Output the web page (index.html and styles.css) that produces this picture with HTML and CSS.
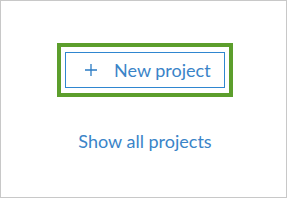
FILE: index.html
```html
<!DOCTYPE html>
<html lang="en">
<head>
    <meta charset="UTF-8">
    <meta name="viewport" content="width=device-width, initial-scale=1.0">
    <title>Projects</title>
    <link rel="stylesheet" href="styles.css">
</head>
<body>

<div class="panel">
    <div class="highlight">
        <button class="new-button">
            <svg class="plus-icon" width="12" height="12" viewBox="0 0 12 12">
                <path d="M6 0V12M0 6H12" stroke="#2a7bc4" stroke-width="1.3" fill="none"/>
            </svg>
            <span class="new-text">New project</span>
        </button>
    </div>
    <a class="show-all" href="#">Show all projects</a>
</div>

</body>
</html>
```

FILE: styles.css
```css
* {
    margin: 0;
    padding: 0;
    box-sizing: border-box;
}

body {
    font-family: Lato, "Open Sans", sans-serif;
    background-color: #fff;
    width: 288px;
    height: 200px;
}

.panel {
    width: 287px;
    height: 198px;
    border: 1px solid #c8c8c8;
    display: flex;
    flex-direction: column;
    align-items: center;
    padding-top: 42px;
    padding-left: 3px;
}

.highlight {
    width: 176px;
    height: 54px;
    border: 4px solid #5c9e2c;
    padding: 5px 4px;
}

.new-button {
    width: 160px;
    height: 36px;
    border: 1px solid #2f86d0;
    background-color: #fff;
    display: flex;
    align-items: center;
    padding-left: 19px;
    font-family: inherit;
    cursor: pointer;
}

.plus-icon {
    display: block;
}

.new-text {
    margin-left: 17px;
    font-size: 18px;
    color: #3a84c8;
}

.show-all {
    margin-top: 33px;
    font-size: 18px;
    color: #3a84c8;
    text-decoration: none;
}
```
